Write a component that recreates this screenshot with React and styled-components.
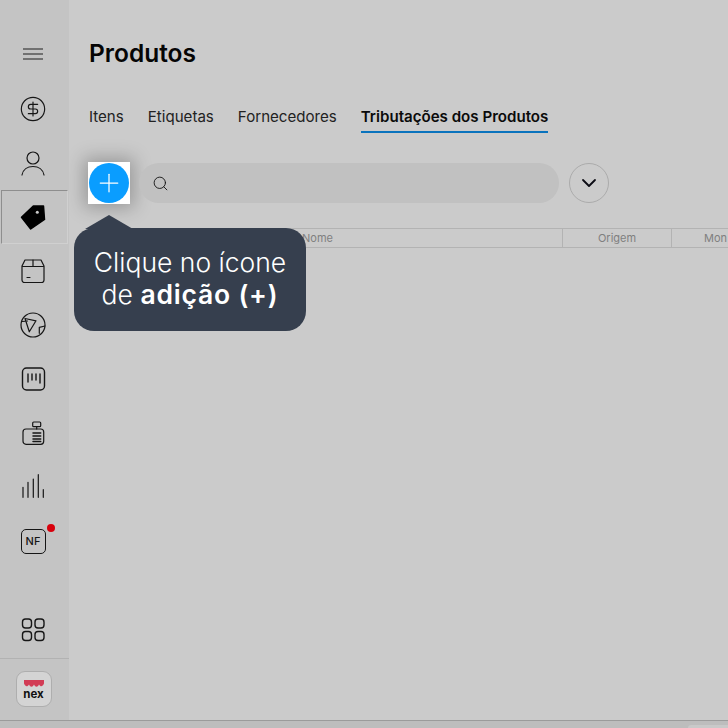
import styled, { createGlobalStyle } from 'styled-components';
import { Plus, Search, ChevronDown, CircleDollarSign } from 'lucide-react';

const GlobalStyle = createGlobalStyle`
  html, body {
    margin: 0;
    padding: 0;
    height: 728px;
    overflow: hidden;
    background: #cbcbcb;
    font-family: Inter, "Liberation Sans", sans-serif;
  }
`;

const tabs = ['Itens', 'Etiquetas', 'Fornecedores', 'Tributações dos Produtos'];

function IconSvg({ children, weight = 1.2 }) {
  return (
    <svg width="28" height="28" viewBox="0 0 28 28" fill="none" stroke="#161616" strokeWidth={weight} strokeLinecap="round" strokeLinejoin="round">
      {children}
    </svg>
  );
}

const sideIcons = [
  <CircleDollarSign key="money" size={28} strokeWidth={1} color="#161616" />,
  <IconSvg key="user">
    <circle cx="14" cy="9" r="6" />
    <path d="M3 26c1-5.500 5.500-8.500 11-8.500s10 3 11 8.500" />
  </IconSvg>,
];

const lowerIcons = [
  <IconSvg key="box">
    <path d="M6 3h16l3 6v14a2.500 2.500 0 0 1-2.500 2.500h-17A2.500 2.500 0 0 1 3 23V9z" />
    <path d="M3.500 9.500h21M14 3v6.500M8 20.500h3" />
  </IconSvg>,
  <IconSvg key="disc">
    <circle cx="14" cy="14" r="12" />
    <path d="M6 7.500l11 2.300-6.700 11zM3.500 10.500l5 -0.500M26 15l-5.700 1.300v6" />
  </IconSvg>,
  <IconSvg key="barcode" weight={1.4}>
    <rect x="3.500" y="3" width="22" height="22" rx="4" />
    <path d="M9 9v8M13 9v6M17 9v6M21 9v9" />
  </IconSvg>,
  <IconSvg key="register">
    <rect x="13.700" y="3" width="8" height="4.700" rx="1" />
    <path d="M17.700 7.700V10" />
    <rect x="4" y="10" width="20.700" height="15.300" rx="3" />
    <path d="M14 14h7.700M14 17h7.700M14 20h7.700M14 22.500h7.700" strokeWidth="1.500" />
  </IconSvg>,
  <IconSvg key="bars">
    <path d="M4 24.300V14.300M9 24.300V9.300M14.300 24.300V6M19.300 24.300V1.700M24.300 24.300V16.700" />
  </IconSvg>,
];

export default function App() {
  return (
    <Page>
      <GlobalStyle />
      <Body>
        <Sidebar>
          <MenuItem $height={57}>
            <svg width="28" height="28" viewBox="0 0 28 28" fill="none" stroke="#555" strokeWidth="1.500">
              <path d="M4 9h20M4 14h20M4 19h20" />
            </svg>
          </MenuItem>
          {sideIcons.map((icon) => <MenuItem key={icon.key}>{icon}</MenuItem>)}
          <ActiveItem>
            <svg width="28" height="28" viewBox="0 0 28 28">
              <path d="M2.500 14.300 L14.300 3 L24.500 3 L25.500 16.500 L11.700 26 Z" fill="#000" stroke="#000" strokeWidth="1.500" strokeLinejoin="round" />
              <circle cx="18.300" cy="9.300" r="1.500" fill="#cbcbcb" />
            </svg>
          </ActiveItem>
          {lowerIcons.map((icon) => <MenuItem key={icon.key}>{icon}</MenuItem>)}
          <MenuItem>
            <NfBadge>NF<RedDot /></NfBadge>
          </MenuItem>
          <Spacer />
          <MenuItem $height={58}>
            <IconSvg weight={1.4}>
              <rect x="3.500" y="4" width="9" height="9" rx="3" />
              <rect x="16" y="4" width="9" height="9" rx="3" />
              <rect x="3.500" y="16.500" width="9" height="9" rx="3" />
              <rect x="16" y="16.500" width="9" height="9" rx="3" />
            </IconSvg>
          </MenuItem>
          <LogoRow>
            <LogoBox>
              <svg width="20" height="7" viewBox="0 0 20 7">
                <path d="M0 0h20v3.500c-1.500 3.500-3.500 3.500-5 1-1.500 3-3.500 3-5 0-1.500 3-3.500 3-5 0-1.500 2.500-3.500 2.500-5-1z" fill="#d23c55" />
              </svg>
              <LogoText>nex</LogoText>
            </LogoBox>
          </LogoRow>
        </Sidebar>
        <Main>
          <Title>Produtos</Title>
          <Tabs>
            {tabs.map((tab, i) => (
              <Tab key={tab} $active={i === tabs.length - 1}>{tab}</Tab>
            ))}
          </Tabs>
          <Toolbar>
            <HighlightBox>
              <AddButton>
                <Plus size={30} strokeWidth={1} color="#fff" />
              </AddButton>
            </HighlightBox>
            <SearchBar>
              <Search size={17} strokeWidth={1.3} color="#161616" />
            </SearchBar>
            <ExpandButton>
              <ChevronDown size={24} strokeWidth={1.8} color="#0c0c14" />
            </ExpandButton>
          </Toolbar>
          <TableHead>
            <HeadCell $width={210} $align="left" $plain />
            <HeadCell $width={261} $align="left">Nome</HeadCell>
            <HeadCell $width={109}>Origem</HeadCell>
            <HeadCell $width={120} $align="left" $pad={32}>Mon</HeadCell>
          </TableHead>
          <Tooltip>
            Clique no ícone<br />de <strong>adição (+)</strong>
          </Tooltip>
        </Main>
      </Body>
      <BottomBar>
        <CornerTab />
      </BottomBar>
    </Page>
  );
}

const Page = styled.div`
  width: 728px;
  height: 728px;
  display: flex;
  flex-direction: column;
  overflow: hidden;
`;

const Body = styled.div`
  flex: 1;
  display: flex;
  min-height: 0;
`;

const Sidebar = styled.nav`
  width: 69px;
  flex-shrink: 0;
  display: flex;
  flex-direction: column;
  align-items: flex-start;
  padding-top: 25px;
  box-sizing: border-box;
  background: #c4c4c4;
`;

const MenuItem = styled.div`
  width: 100%;
  height: ${({ $height }) => $height || 54}px;
  flex-shrink: 0;
  box-sizing: border-box;
  padding-right: 3px;
  display: flex;
  align-items: center;
  justify-content: center;
`;

const ActiveItem = styled(MenuItem)`
  width: 67px;
  margin-left: 1px;
  padding-right: 3px;
  border-top: 1px solid #8e8e8e;
  border-left: 1px solid #8e8e8e;
  border-right: 1px solid #d0d0d0;
  border-bottom: 1px solid #d0d0d0;
`;

const NfBadge = styled.div`
  position: relative;
  width: 23px;
  height: 23px;
  display: flex;
  align-items: center;
  justify-content: center;
  border: 1.2px solid #161616;
  border-radius: 5px;
  font-size: 11px;
  font-weight: 500;
  color: #161616;
`;

const RedDot = styled.span`
  position: absolute;
  top: -6px;
  right: -10px;
  width: 8px;
  height: 8px;
  border-radius: 50%;
  background: #d8000c;
`;

const Spacer = styled.div`
  flex: 1;
`;

const LogoRow = styled.div`
  width: 100%;
  height: 62px;
  flex-shrink: 0;
  display: flex;
  justify-content: center;
  padding: 12px 2px 0 0;
  box-sizing: border-box;
  border-top: 1px solid #b2b2b2;
`;

const LogoBox = styled.div`
  width: 36px;
  height: 36px;
  box-sizing: border-box;
  display: flex;
  flex-direction: column;
  align-items: center;
  padding-top: 8px;
  border: 1px solid #aeaeae;
  border-radius: 9px;
  background: #d4d4d4;
`;

const LogoText = styled.span`
  font-size: 11.500px;
  line-height: 14px;
  font-weight: 700;
  color: #111;
`;

const Main = styled.main`
  position: relative;
  flex: 1;
  min-width: 0;
  padding: 39px 0 0 20px;
  background: #cbcbcb;
  overflow: hidden;
`;

const Title = styled.h1`
  margin: 0;
  font-size: 24.500px;
  line-height: 28px;
  font-weight: 600;
  color: #050505;
`;

const Tabs = styled.div`
  display: flex;
  gap: 24px;
  margin-top: 39px;
`;

const Tab = styled.div`
  padding-bottom: 3px;
  font-size: 15.100px;
  line-height: 22px;
  font-weight: ${({ $active }) => ($active ? 600 : 400)};
  color: ${({ $active }) => ($active ? '#0a0a0a' : '#222')};
  border-bottom: 2px solid ${({ $active }) => ($active ? '#0a73bd' : 'transparent')};
`;

const Toolbar = styled.div`
  display: flex;
  align-items: center;
  gap: 9px;
  margin-top: 29px;
  margin-left: -1px;
`;

const HighlightBox = styled.div`
  width: 42px;
  height: 42px;
  flex-shrink: 0;
  display: flex;
  align-items: center;
  justify-content: center;
  background: #fff;
  box-shadow: 0 0 18px 4px rgba(0, 0, 0, 0.25);
`;

const AddButton = styled.div`
  width: 40px;
  height: 40px;
  display: flex;
  align-items: center;
  justify-content: center;
  border-radius: 50%;
  background: #0a9dff;
`;

const SearchBar = styled.div`
  width: 420px;
  height: 40px;
  display: flex;
  align-items: center;
  padding-left: 13px;
  box-sizing: border-box;
  border-radius: 20px;
  background: #c1c1c1;
`;

const ExpandButton = styled.div`
  width: 40px;
  height: 40px;
  margin-left: 1px;
  display: flex;
  align-items: center;
  justify-content: center;
  box-sizing: border-box;
  border: 1px solid #ababab;
  border-radius: 50%;
`;

const TableHead = styled.div`
  display: flex;
  box-sizing: border-box;
  height: 20px;
  margin-top: 24px;
  margin-left: 3px;
  width: 700px;
  border-top: 1px solid #b3b3b3;
  border-bottom: 1px solid #b3b3b3;
`;

const HeadCell = styled.div`
  width: ${({ $width }) => $width}px;
  flex-shrink: 0;
  box-sizing: border-box;
  padding-left: ${({ $pad }) => $pad || 0}px;
  font-size: 11px;
  line-height: 18px;
  color: #7f7f7f;
  text-align: ${({ $align }) => $align || 'center'};
  border-right: ${({ $plain }) => ($plain ? 'none' : '1px solid #b3b3b3')};
`;

const Tooltip = styled.div`
  position: absolute;
  left: 5px;
  top: 228px;
  width: 232px;
  height: 103px;
  box-sizing: border-box;
  text-align: center;
  padding-top: 18px;
  font-size: 26.500px;
  line-height: 32px;
  font-weight: 300;
  color: #fff;
  background: #363f4e;
  border-radius: 20px;

  strong {
    font-weight: 600;
    letter-spacing: 0.800px;
  }

  &::before {
    content: '';
    position: absolute;
    left: 11px;
    top: -13px;
    border-left: 24px solid transparent;
    border-right: 24px solid transparent;
    border-bottom: 14px solid #363f4e;
  }
`;

const BottomBar = styled.div`
  position: relative;
  height: 8px;
  flex-shrink: 0;
  background: #bdbdbd;
  border-top: 1px solid #9b9b9b;
  box-sizing: border-box;
`;

const CornerTab = styled.div`
  position: absolute;
  right: 0;
  bottom: 0;
  width: 40px;
  height: 3px;
  border-radius: 4px 0 0 0;
  background: #c9c9c9;
`;
